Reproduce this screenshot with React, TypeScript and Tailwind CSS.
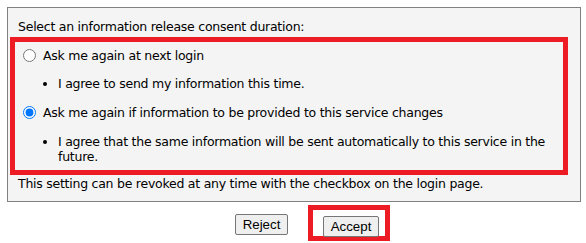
import React from "react";

export default function App() {
  const font = { fontFamily: '"DejaVu Sans", Verdana, sans-serif' };
  const btnFont = { fontFamily: '"Liberation Sans", Arial, sans-serif' };
  return (
    <div className="w-[586px] h-[243px] bg-white overflow-hidden" style={font}>
      <div className="ml-[7px] mt-[7px] w-[574px] h-[195px] border border-[#808080] bg-[#f4f4f4] text-[12.5px] tracking-[-0.25px] leading-[15px] text-black">
        <div className="pl-[10px] pt-[11px]">Select an information release consent duration:</div>
        <div className="ml-[2px] mt-[3px] w-[558px] h-[138px] border-[5px] border-[#ed1c24] pt-[6px]">
          <label className="flex items-center">
            <input type="radio" name="d" className="ml-[8px] mr-[7px] w-[13px] h-[13px] m-0" />
            <span>Ask me again at next login</span>
          </label>
          <div className="flex items-start mt-[13px]">
            <span className="ml-[28px] mt-[6px] w-[4px] h-[4px] rounded-full bg-black shrink-0" />
            <span className="ml-[11px]">I agree to send my information this time.</span>
          </div>
          <label className="flex items-center mt-[14px]">
            <input type="radio" name="d" defaultChecked className="ml-[8px] mr-[7px] w-[13px] h-[13px] m-0" />
            <span>Ask me again if information to be provided to this service changes</span>
          </label>
          <div className="flex items-start mt-[14px]">
            <span className="ml-[28px] mt-[6px] w-[4px] h-[4px] rounded-full bg-black shrink-0" />
            <span className="ml-[11px]">
              I agree that the same information will be sent automatically to this service in the
              <br />
              future.
            </span>
          </div>
        </div>
        <div className="pl-[10px] pt-[1px]">This setting can be revoked at any time with the checkbox on the login page.</div>
      </div>
      <div className="flex items-start mt-[1px]">
        <button
          className="ml-[235px] mt-[11px] w-[53px] h-[21px] border border-[#767676] rounded-[2px] bg-[#efefef] text-[13.3px] leading-none text-black"
          style={btnFont}
        >
          Reject
        </button>
        <div className="ml-[20px] mt-[2px] w-[82px] h-[36px] border-[5px] border-[#ed1c24] pl-[10px] pt-[4px]">
          <button
            className="w-[56px] h-[21px] border border-[#767676] rounded-[2px] bg-[#efefef] text-[13.3px] leading-none text-black"
            style={btnFont}
          >
            Accept
          </button>
        </div>
      </div>
    </div>
  );
}
